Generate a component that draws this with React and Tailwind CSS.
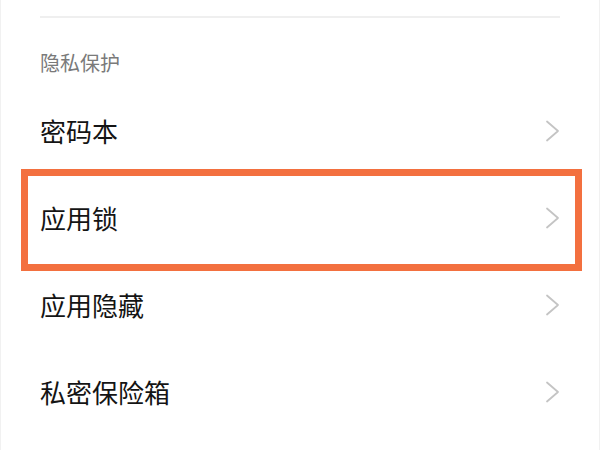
import React from 'react';

const items = [
  { id: 'notes', label: '密码本' },
  { id: 'applock', label: '应用锁', highlighted: true },
  { id: 'hide', label: '应用隐藏' },
  { id: 'vault', label: '私密保险箱' },
];

function Chevron() {
  return (
    <svg width="15" height="22" viewBox="0 0 15 22" fill="none" className="shrink-0">
      <path d="M2 1.5 L13 11 L2 20.5" stroke="#c4c4c4" strokeWidth="1.8" strokeLinecap="round" strokeLinejoin="round" />
    </svg>
  );
}

export default function App() {
  return (
    <div
      className="w-[600px] h-[450px] overflow-hidden bg-white border-x border-[#f1f1f1] px-[39px] pt-[16px]"
      style={{ fontFamily: '"Noto Sans CJK SC", "Noto Sans", sans-serif' }}
    >
      <div className="h-[2px] bg-[#efefef]" />

      <div className="mt-[32px] text-[20px] leading-[26px] text-[#7a7a7a]">隐私保护</div>

      <div className="mt-[11px]">
        {items.map((item) => (
          <div key={item.id} className="relative h-[87px] flex items-center justify-between">
            <span className="text-[26px] leading-[34px] text-[#141414]">{item.label}</span>
            <Chevron />
            {item.highlighted && (
              // orange highlight frame drawn over the row
              <div className="absolute left-[-19px] right-[-22px] top-[-5px] bottom-[-10px] border-[7px] border-[#f3703f] pointer-events-none" />
            )}
          </div>
        ))}
      </div>
    </div>
  );
}
